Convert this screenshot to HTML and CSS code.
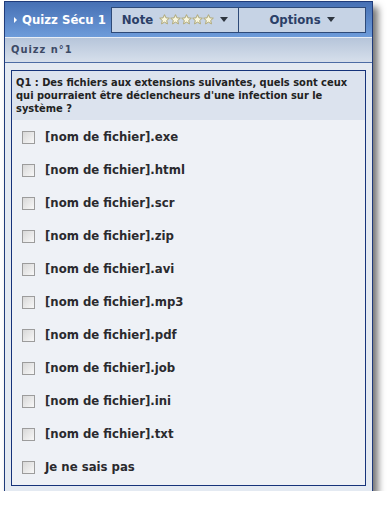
FILE: index.html
```html
<!DOCTYPE html>
<html lang="fr">

<head>
    <meta charset="UTF-8">
    <meta name="viewport" content="width=device-width, initial-scale=1.0">
    <title>Quizz Sécu 1</title>
    <link rel="stylesheet" href="styles.css">
</head>

<body>
    <div class="window">
        <div class="titlebar">
            <div class="title"><span class="title-arrow"></span>Quizz Sécu 1</div>
            <div class="tools">
                <div class="tool">Note
                    <span class="stars">
                        <svg viewBox="0 0 10 10"><path d="M5 .6l1.3 2.9 3.1.3-2.4 2.1.7 3.1L5 7.4 2.3 9l.7-3.1L.6 3.8l3.1-.3z"/></svg>
                        <svg viewBox="0 0 10 10"><path d="M5 .6l1.3 2.9 3.1.3-2.4 2.1.7 3.1L5 7.4 2.3 9l.7-3.1L.6 3.8l3.1-.3z"/></svg>
                        <svg viewBox="0 0 10 10"><path d="M5 .6l1.3 2.9 3.1.3-2.4 2.1.7 3.1L5 7.4 2.3 9l.7-3.1L.6 3.8l3.1-.3z"/></svg>
                        <svg viewBox="0 0 10 10"><path d="M5 .6l1.3 2.9 3.1.3-2.4 2.1.7 3.1L5 7.4 2.3 9l.7-3.1L.6 3.8l3.1-.3z"/></svg>
                        <svg viewBox="0 0 10 10"><path d="M5 .6l1.3 2.9 3.1.3-2.4 2.1.7 3.1L5 7.4 2.3 9l.7-3.1L.6 3.8l3.1-.3z"/></svg>
                    </span>
                    <span class="caret"></span>
                </div>
                <div class="tool">Options <span class="caret"></span></div>
            </div>
        </div>

        <div class="subbar">Quizz n°1</div>

        <div class="content">
            <div class="question">
                <div class="question-text">Q1 : Des fichiers aux extensions suivantes, quels sont ceux qui pourraient être déclencheurs d'une infection sur le système ?</div>
                <ul class="answers">
                    <li><span class="box"></span>[nom de fichier].exe</li>
                    <li><span class="box"></span>[nom de fichier].html</li>
                    <li><span class="box"></span>[nom de fichier].scr</li>
                    <li><span class="box"></span>[nom de fichier].zip</li>
                    <li><span class="box"></span>[nom de fichier].avi</li>
                    <li><span class="box"></span>[nom de fichier].mp3</li>
                    <li><span class="box"></span>[nom de fichier].pdf</li>
                    <li><span class="box"></span>[nom de fichier].job</li>
                    <li><span class="box"></span>[nom de fichier].ini</li>
                    <li><span class="box"></span>[nom de fichier].txt</li>
                    <li><span class="box"></span>Je ne sais pas</li>
                </ul>
            </div>
        </div>
    </div>
</body>

</html>
```

FILE: styles.css
```css
body {
    margin: 0;
    background: #fff;
    font-family: "DejaVu Sans Condensed", "DejaVu Sans", sans-serif;
    font-weight: bold;
}

.window {
    width: 367px;
    margin: 1px 0 0 4px;
    border: 1px solid #1f3b7a;
    border-bottom: none;
    background: #e4eaf2;
    box-shadow: 5px 6px 7px rgba(0, 0, 0, 0.55);
}

.titlebar {
    height: 35px;
    display: flex;
    align-items: center;
    background: linear-gradient(#4670b4, #6e9cda);
    border-bottom: 1px solid #e8eef6;
}

.title {
    flex: 0 0 97px;
    display: flex;
    align-items: center;
    color: #fff;
    font-size: 13px;
    padding-left: 9px;
    white-space: nowrap;
}

.title-arrow {
    width: 0;
    height: 0;
    border-left: 3px solid #fff;
    border-top: 3px solid transparent;
    border-bottom: 3px solid transparent;
    margin-right: 5px;
}

.tools {
    display: flex;
}

.tool {
    width: 126px;
    height: 24px;
    display: flex;
    align-items: center;
    justify-content: center;
    background: #c6d3e5;
    border: 1px solid #2e4a78;
    color: #2b3f68;
    font-size: 13px;
}

.tool + .tool {
    border-left: none;
}

.stars {
    display: inline-flex;
    margin-left: 6px;
    gap: 0;
}

.stars svg {
    width: 11px;
    height: 11px;
    fill: #f8f6de;
    stroke: #aea776;
    stroke-width: 0.9;
}

.caret {
    width: 0;
    height: 0;
    border-top: 5px solid #2e3640;
    border-left: 4px solid transparent;
    border-right: 4px solid transparent;
    margin-left: 6px;
}

.subbar {
    height: 24px;
    line-height: 24px;
    padding-left: 6px;
    background: linear-gradient(#b6c5da, #d6dfeb);
    border-bottom: 1px solid #4c6ca4;
    color: #3d4a66;
    font-size: 11px;
    letter-spacing: 1px;
}

.content {
    padding: 7px 6px 5px 6px;
}

.question {
    border: 1px solid #16337a;
    background: #eef1f6;
}

.question-text {
    background: #dce3ee;
    color: #222;
    font-size: 11px;
    line-height: 13px;
    padding: 5px 4px 5px 4px;
}

.answers {
    list-style: none;
    margin: 0;
    padding: 0 0 2px 10px;
}

.answers li {
    height: 33px;
    display: flex;
    align-items: center;
    color: #2a2a2e;
    font-size: 13px;
}

.box {
    width: 11px;
    height: 11px;
    border: 1px solid #9c9c9c;
    background: linear-gradient(135deg, #d8d8d8, #f8f8f8);
    margin: 2px 10px 0 0;
}
```
